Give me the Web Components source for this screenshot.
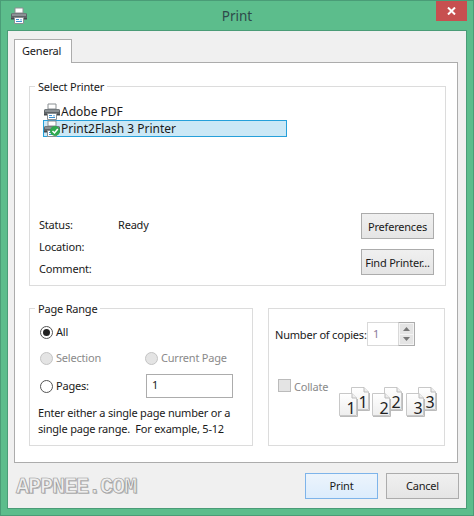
<!DOCTYPE html>
<html><head><meta charset="utf-8">
<style>html,body{margin:0;padding:0}body{width:474px;height:516px;overflow:hidden;font:11px/16px "Noto Sans",sans-serif;letter-spacing:-.2px;color:#1a1a1a}</style>
</head><body>
<print-dialog></print-dialog>
<template id="printer-svg">
<svg width="18" height="17" viewBox="0 0 18 17"><path d="M5 1h8v5H5z" fill="#fff" stroke="#8a8f92"/><path d="M1 7.500Q1 6 2.500 6h13Q17 6 17 7.500V12H1z" fill="#5d6367"/><path d="M2 6.500h14V9H2z" fill="#8b9195"/><path d="M1 11h16v1.500H1z" fill="#44494c"/><path d="M4.500 10.500h9V16.500h-9z" fill="#fff" stroke="#8a8f92"/><path d="M6 12.500h3M6 14.500h6" stroke="#3b90d0"/><path d="M10 12h2v1.500h-2z" fill="#9cc8e8"/></svg>
</template>
<script>
const T=(h)=>{const t=document.createElement('template');t.innerHTML=h;return t};
const def=(name,html)=>{const t=T(html);customElements.define(name,class extends HTMLElement{constructor(){super();this.attachShadow({mode:'open'}).appendChild(t.content.cloneNode(true))}})};
const printerIcon=document.getElementById('printer-svg').innerHTML;

def('title-bar',`<style>:host{display:flex;height:29px;align-items:flex-start;position:relative;justify-content:center}
.ic{position:absolute;left:9px;top:6px}
.t{font:13.5px/31px "Noto Sans",sans-serif;letter-spacing:0;color:#2e4a4a}
.x{position:absolute;right:6px;top:0;width:31px;height:20px;background:#c75050;display:flex;align-items:center;justify-content:center}</style>
<span class="ic">${printerIcon}</span><span class="t"><slot></slot></span>
<span class="x"><svg width="9" height="8" viewBox="0 0 9 8"><path d="M1 0.500L8 7.500M8 0.500L1 7.500" stroke="#fff" stroke-width="2"/></svg></span>`);

def('ui-group',`<style>:host{display:block;box-sizing:border-box;border:1px solid #dcdcdc;position:relative}
.l{position:absolute;left:5px;top:-8px;background:#fff;padding:0 3px;line-height:16px;white-space:nowrap}
.b{display:flex;flex-direction:column;height:100%;box-sizing:border-box}</style>
<span class="l"><slot name="label"></slot></span><div class="b"><slot></slot></div>`);

def('ui-button',`<style>:host{display:flex;box-sizing:border-box;width:73px;height:26px;padding-top:1px;align-items:center;justify-content:center;border:1px solid #acacac;background:linear-gradient(#f0f0f0,#e5e5e5);white-space:nowrap;color:#1a1a1a}
:host([default]){border-color:#7eb4ea;background:linear-gradient(#ecf4fc,#dcecfc)}</style><slot></slot>`);

def('ui-radio',`<style>:host{display:inline-flex;align-items:center;gap:3px;height:20px;white-space:nowrap}
.r{box-sizing:border-box;width:13px;height:13px;border-radius:50%;border:1px solid #555;background:#fff;display:flex;align-items:center;justify-content:center}
.d{width:7px;height:7px;border-radius:50%;background:#222;display:none}
:host([checked]) .d{display:block}
:host([disabled]){color:#8a8a8a}
:host([disabled]) .r{border-color:#c4c4c4;background:#e4e4e4}</style>
<span class="r"><span class="d"></span></span><slot></slot>`);

def('printer-item',`<style>:host{display:flex;box-sizing:border-box;height:17px;width:244px;align-items:center;position:relative;font-size:12px;letter-spacing:0}
:host([selected]){background:#cbe8f6;border:1px solid #26a0da}
.i{display:flex;width:18px;flex:none}
:host([selected]) .i{margin-left:-1px}
.n{padding-top:1px}
.c{position:absolute;left:6px;top:5px;width:10px;height:10px;display:none}
:host([selected]) .c{display:block}</style>
<span class="i">${printerIcon}</span><span class="n"><slot></slot></span>
<svg class="c" viewBox="0 0 10 10"><circle cx="5" cy="5" r="5" fill="#2fa84f"/><path d="M2.500 5L4.500 7L7.800 3" stroke="#fff" stroke-width="1.500" fill="none"/></svg>`);

def('spin-box',`<style>:host{display:flex;height:24px;width:48px;box-sizing:border-box;color:#8a7a9a}
.v{box-sizing:border-box;width:31px;border:1px solid #d9d9d9;border-right:0;padding-left:5px;line-height:22px}
.s{box-sizing:border-box;width:17px;border:1px solid #acacac;border-left:1px solid #d9d9d9;display:flex;flex-direction:column;gap:1px;background:#f4f4f4;padding:1px}
.s span{flex:1;background:#e4e4e4;display:flex;align-items:center;justify-content:center}</style>
<span class="v"><slot></slot></span>
<span class="s"><span><svg width="7" height="4"><path d="M0 4L3.500 0L7 4z" fill="#777"/></svg></span><span><svg width="7" height="4"><path d="M0 0L3.500 4L7 0z" fill="#777"/></svg></span></span>`);

const pg=(x,y,n)=>`<g transform="translate(${x} ${y})"><path d="M.5.500H13L17.500 5V22.500H.5z" fill="url(#g)" stroke="#c8c8c8"/><path d="M13 .5V5H17.500" fill="#eee" stroke="#bbb"/><path d="M1 23.500H18.500V6" fill="none" stroke="#bbb"/><text x="12" y="21" text-anchor="middle" font-family="Noto Sans" font-size="16" letter-spacing="0" fill="#222">${n}</text></g>`;
def('collate-pages',`<style>:host{display:block;width:98px;height:36px;flex:none}svg{display:block}</style>
<svg width="98" height="36" viewBox="0 0 98 36"><defs><linearGradient id="g" x1="0" y1="0" x2="0" y2="1"><stop offset="0" stop-color="#fff"/><stop offset="1" stop-color="#eee"/></linearGradient></defs>
${pg(12,0,1)}${pg(0,6,1)}${pg(45,0,2)}${pg(33,6,2)}${pg(79,0,3)}${pg(67,6,3)}</svg>`);

def('tab-panel',`<style>:host{display:flex;flex-direction:column}
.tabs{display:flex;height:24px;position:relative;z-index:1}
.tab{box-sizing:border-box;width:58px;height:24px;border:1px solid #acacac;border-bottom:0;background:#fff;padding:3px 0 0 7px;line-height:16px}
.p{box-sizing:border-box;height:401px;margin-top:-1px;border:1px solid #acacac;background:#fff;padding:23px 12px 0 14px}</style>
<div class="tabs"><div class="tab"><slot name="tab"></slot></div></div><div class="p"><slot></slot></div>`);

def('select-printer',`<style>:host{display:block}
ui-group{height:200px;width:417px}
.list{display:flex;flex-direction:column;padding:16px 0 0 13px}
.bot{margin-top:auto;display:flex;justify-content:space-between;padding:0 11px 5px 9px}
.info{display:grid;grid-template-columns:79px auto;grid-auto-rows:22px;align-items:center;margin-top:1px;height:66px}
.btn{display:flex;flex-direction:column;gap:10px}</style>
<ui-group><span slot="label">Select Printer</span>
<div class="list"><printer-item>Adobe PDF</printer-item><printer-item selected>Print2Flash 3 Printer</printer-item></div>
<div class="bot"><div class="info"><span>Status:</span><span>Ready</span><span>Location:</span><span></span><span>Comment:</span><span></span></div>
<div class="btn"><ui-button>Preferences</ui-button><ui-button>Find Printer...</ui-button></div></div>
</ui-group>`);

def('page-range',`<style>:host{display:block}ui-group{height:138px;width:224px}
.w{padding:13px 10px 0 10px;display:flex;flex-direction:column}
.all{line-height:18px}
.two{display:grid;grid-template-columns:105px auto;margin-top:6px}
.pg{display:grid;grid-template-columns:106px 87px;align-items:center;margin-top:6px}
.in{box-sizing:border-box;height:24px;border:1px solid #acacac;padding-left:5px;line-height:20px}
.h{margin:7px 0 0 -2px;white-space:nowrap}</style>
<ui-group><span slot="label">Page Range</span><div class="w">
<div class="all"><ui-radio checked>All</ui-radio></div>
<div class="two"><ui-radio disabled>Selection</ui-radio><ui-radio disabled>Current Page</ui-radio></div>
<div class="pg"><ui-radio>Pages:</ui-radio><span class="in">1</span></div>
<div class="h">Enter either a single page number or a<br>single page range.&nbsp; For example, 5-12</div>
</div></ui-group>`);

def('copies-box',`<style>:host{display:block}ui-group{height:138px;width:177px}
.a{display:flex;align-items:center;padding:13px 0 0 6px;white-space:nowrap}.a span{width:92px;padding-top:2px}
.b{display:flex;padding:33px 7px 0 9px}
.k{box-sizing:border-box;width:13px;height:13px;border:1px solid #bbb;background:#e4e4e4;flex:none}
.c{color:#8a8a8a;margin-left:3px;line-height:15px}
collate-pages{margin:8px 0 0 auto}</style>
<ui-group><div class="a"><span>Number of copies:</span><spin-box>1</spin-box></div>
<div class="b"><span class="k"></span><span class="c">Collate</span><collate-pages></collate-pages></div></ui-group>`);

def('print-dialog',`<style>:host{display:block;box-sizing:border-box;width:474px;height:516px;background:#5cbd8c;border:1px solid #4a9c77}
.cl{box-sizing:border-box;width:460px;height:479px;margin-left:6px;background:#f0f0f0;border:1px solid #4a9c77;padding:8px 0 0 6px;display:flex;flex-direction:column}
.tp{width:444px}
.r{display:flex;gap:15px;margin-top:22px}
.f{display:flex;align-items:center;height:45px;padding:0 7px 0 2px;gap:8px}
.wm{font:bold 22px/26px "Liberation Mono",monospace;letter-spacing:-1.2px;color:#efefef;-webkit-text-stroke:.7px #9a9a9a;text-shadow:1px 1px 0 #bdbdbd;margin:4px auto 0 0}
</style>
<title-bar>Print</title-bar>
<div class="cl"><tab-panel class="tp"><span slot="tab">General</span>
<select-printer></select-printer>
<div class="r"><page-range></page-range><copies-box></copies-box></div>
</tab-panel>
<div class="f"><span class="wm">APPNEE.COM</span><ui-button default>Print</ui-button><ui-button>Cancel</ui-button></div>
</div>`);
</script>
</body></html>
